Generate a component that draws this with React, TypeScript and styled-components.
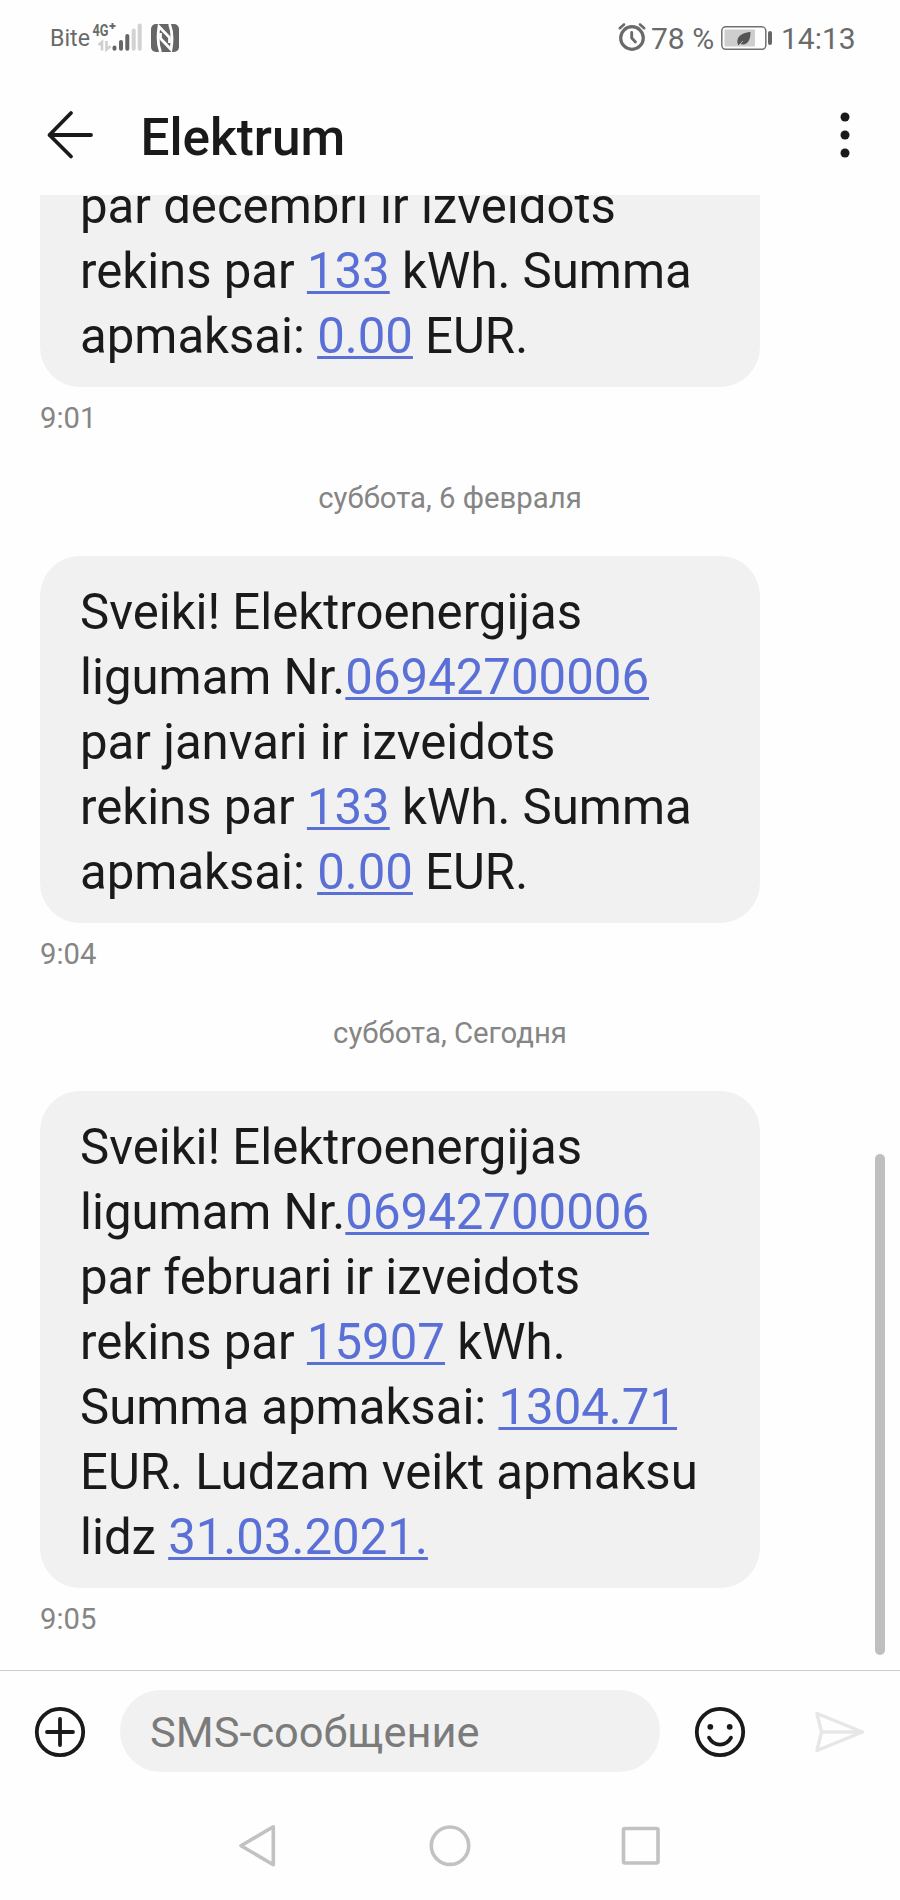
import React from "react";
import styled, { createGlobalStyle } from "styled-components";

const GlobalStyle = createGlobalStyle`
  * { box-sizing: border-box; }
  body {
    margin: 0;
    background: #fefefe;
    font-family: Roboto, "Liberation Sans", sans-serif;
    color: #1a1a1a;
  }
  svg { display: block; flex: none; }
`;

const Screen = styled.div`
  width: 900px;
  height: 1900px;
  display: flex;
  flex-direction: column;
  overflow: hidden;
`;

const StatusBar = styled.div`
  height: 75px;
  flex: none;
  display: flex;
  justify-content: space-between;
  padding: 0 45px 0 50px;
  color: #6a6a6a;
`;

const StatusGroup = styled.div`
  display: flex;
  align-items: flex-start;
`;

const Carrier = styled.span`
  width: 42px;
  padding-top: 24px;
  font-size: 23.2px;
  line-height: 28px;
`;

const StatusIcon = styled.span<{ $top: number; $left?: number; $right?: number }>`
  padding: ${(p) => p.$top}px ${(p) => p.$right ?? 0}px 0 ${(p) => p.$left ?? 0}px;
`;

const StatusText = styled.span<{ $width: number }>`
  width: ${(p) => p.$width}px;
  padding-top: 21px;
  font-size: 30px;
  line-height: 36px;
  white-space: nowrap;
`;

const Header = styled.header`
  height: 120px;
  flex: none;
  display: flex;
  align-items: center;
  padding: 0 30px 0 46px;
`;

const Title = styled.h1`
  flex: 1;
  margin: 0 0 0 44.5px;
  font-size: 51.3px;
  font-weight: 500;
  line-height: 60px;
  padding-top: 5px;
`;

const IconButton = styled.button<{ $size: number }>`
  width: ${(p) => p.$size}px;
  height: ${(p) => p.$size}px;
  flex: none;
  display: grid;
  place-items: center;
  padding: 0;
  border: 0;
  background: none;
  color: inherit;
`;

const Thread = styled.main`
  position: relative;
  height: 1475px;
  flex: none;
  display: flex;
  flex-direction: column;
  justify-content: flex-end;
  padding: 0 0 34px 40px;
  overflow: hidden;
`;

const ScrollThumb = styled.div`
  position: absolute;
  right: 15px;
  bottom: 15px;
  width: 10px;
  height: 501px;
  border-radius: 5px;
  background: #bfbfbf;
`;

const Bubble = styled.div<{ $continued?: boolean }>`
  width: 720px;
  flex: none;
  padding: 24px 20px 18px 40px;
  border-radius: ${(p) => (p.$continued ? "0 0 40px 40px" : "40px")};
  background: #f1f1f1;
  font-size: 49.14px;
  line-height: 65px;
  white-space: nowrap;
`;

const Line = styled.div``;

const Link = styled.a`
  color: #5b70d6;
  text-decoration: underline;
  text-decoration-thickness: 3px;
  text-underline-offset: 3px;
  text-decoration-skip-ink: none;
`;

const Time = styled.time`
  flex: none;
  margin-top: 15px;
  font-size: 29.2px;
  line-height: 33px;
  color: #858585;
`;

const DateLabel = styled.div<{ $gap?: number }>`
  flex: none;
  width: 820px;
  margin: ${(p) => p.$gap ?? 47}px 0 41px;
  font-size: 29.3px;
  line-height: 33px;
  text-align: center;
  color: #858585;
`;

const Composer = styled.footer`
  height: 122px;
  flex: none;
  display: flex;
  align-items: center;
  padding: 0 30px;
  border-top: 1px solid #cbcbcb;
`;

const Field = styled.div`
  width: 540px;
  height: 82px;
  margin: 0 30px 1px;
  padding: 0 30px;
  border-radius: 41px;
  background: #f1f1f1;
  font-size: 43.4px;
  line-height: 86px;
  color: #7b7b7b;
  white-space: nowrap;
`;

const Spacer = styled.div`
  flex: 1;
`;

const NavBar = styled.nav`
  flex: 1;
  display: flex;
  justify-content: center;
  padding-top: 24px;
  gap: 131px;
  color: #c2c2c2;
`;

const SignalIcon = () => (
  <svg width="52" height="34" viewBox="92 20 52 34">
    <text x="92.5" y="36" fontSize="17" fontWeight="700" fill="#6a6a6a" textLength="16" lengthAdjust="spacingAndGlyphs">4G</text>
    <path d="M109.5 26h6M112.5 23v6" stroke="#6a6a6a" strokeWidth="2" />
    <path d="M98.500 45L102 42V50.500M106.500 41V49.500L110.500 46.200" fill="none" stroke="#cfcfcf" strokeWidth="2.600" />
    <g strokeWidth="4" strokeLinecap="round">
      <path d="M114.500 47.500v1.200M121 42v6.700M127.300 36v12.700" stroke="#666" />
      <path d="M133.700 30.500v18.200M139.700 25.500v23.200" stroke="#d2d2d2" />
    </g>
  </svg>
);

const NfcIcon = () => (
  <svg width="28" height="28" viewBox="0 0 28 28">
    <rect x="0" y="0" width="28" height="28" rx="5" fill="#666" />
    <path d="M9.500 28C6.800 21 6.800 10 8 2.500L18.500 13.500V19" fill="none" stroke="#fefefe" strokeWidth="2.800" />
    <path d="M18.500 0C21.300 7 21.300 18 20 25.500L9.500 14.500V9" fill="none" stroke="#fefefe" strokeWidth="2.800" />
  </svg>
);

const AlarmIcon = () => (
  <svg width="28" height="30" viewBox="0 0 28 30" fill="none" stroke="#6a6a6a" strokeLinecap="round">
    <circle cx="14" cy="16" r="11.300" strokeWidth="3.200" />
    <path d="M13.700 10.500v5.500l3.700 4" strokeWidth="2.900" />
    <path d="M1.800 6.200L6 2.500M26.200 6.200L22 2.500" strokeWidth="2.600" />
  </svg>
);

const BatteryIcon = () => (
  <svg width="52" height="26" viewBox="0 0 52 26">
    <rect x="0.800" y="1.800" width="44" height="22.500" rx="4" fill="#fefefe" stroke="#707070" strokeWidth="1.500" />
    <rect x="3.500" y="4.500" width="30.500" height="17" rx="1" fill="#cecece" />
    <path d="M17.500 20.500C15 16 16 8 29.500 7C29.500 16 26 21 19.500 19Z" fill="#555" />
    <path d="M17 21L22 16" stroke="#cecece" strokeWidth="0.800" />
    <path d="M49 8v10" stroke="#666" strokeWidth="4" strokeLinecap="round" />
  </svg>
);

const BackIcon = () => (
  <svg width="50" height="50" viewBox="0 0 50 50" fill="none" stroke="#1a1a1a" strokeWidth="3.800" strokeLinecap="round" strokeLinejoin="round">
    <path d="M25 3L3.500 25L25 46.500M3.500 25H45" />
  </svg>
);

const MoreIcon = () => (
  <svg width="10" height="50" viewBox="0 0 10 50" fill="#1a1a1a">
    <circle cx="5" cy="7" r="4.500" />
    <circle cx="5" cy="25" r="4.500" />
    <circle cx="5" cy="43" r="4.500" />
  </svg>
);

const PlusIcon = () => (
  <svg width="52" height="52" viewBox="0 0 52 52" fill="none" stroke="#1a1a1a" strokeWidth="3.800" strokeLinecap="round">
    <circle cx="26" cy="26" r="23.200" />
    <path d="M26 13v26M13 26h26" />
  </svg>
);

const SmileIcon = () => (
  <svg width="52" height="52" viewBox="0 0 52 52" fill="none" stroke="#1a1a1a" strokeWidth="3.800" strokeLinecap="round">
    <circle cx="26" cy="26" r="23.200" />
    <circle cx="16.300" cy="20.800" r="2.900" fill="#1a1a1a" stroke="none" />
    <circle cx="35.700" cy="20.800" r="2.900" fill="#1a1a1a" stroke="none" />
    <path d="M15 31.700C20 41 32 41 37 31.700" />
  </svg>
);

const SendIcon = () => (
  <svg width="50" height="42" viewBox="0 0 50 42" fill="none" stroke="#e7e7e7" strokeWidth="3.400" strokeLinejoin="round">
    <path d="M2 2.500L47.500 21L2 39.500L6.500 21ZM6.500 21H47" />
  </svg>
);

const NavIcon = ({ children }: { children: React.ReactNode }) => (
  <svg width="60" height="60" viewBox="0 0 60 60" fill="none" stroke="currentColor" strokeWidth="3.600" strokeLinejoin="round">
    {children}
  </svg>
);

export default function App() {
  return (
    <>
      <GlobalStyle />
      <Screen>
        <StatusBar>
          <StatusGroup>
            <Carrier>Bite</Carrier>
            <StatusIcon $top={20}><SignalIcon /></StatusIcon>
            <StatusIcon $top={24} $left={7}><NfcIcon /></StatusIcon>
          </StatusGroup>
          <StatusGroup>
            <StatusIcon $top={22} $right={5}><AlarmIcon /></StatusIcon>
            <StatusText $width={70}>78 %</StatusText>
            <StatusIcon $top={25} $right={8}><BatteryIcon /></StatusIcon>
            <StatusText $width={74}>14:13</StatusText>
          </StatusGroup>
        </StatusBar>
        <Header>
          <IconButton $size={50} aria-label="Back"><BackIcon /></IconButton>
          <Title>Elektrum</Title>
          <IconButton $size={50} aria-label="More"><MoreIcon /></IconButton>
        </Header>
        <Thread>
          <Bubble $continued>
            <Line>par decembri ir izveidots</Line>
            <Line>rekins par <Link>133</Link> kWh. Summa</Line>
            <Line>apmaksai: <Link>0.00</Link> EUR.</Line>
          </Bubble>
          <Time>9:01</Time>
          <DateLabel>суббота, 6 февраля</DateLabel>
          <Bubble>
            <Line>Sveiki! Elektroenergijas</Line>
            <Line>ligumam Nr.<Link>06942700006</Link></Line>
            <Line>par janvari ir izveidots</Line>
            <Line>rekins par <Link>133</Link> kWh. Summa</Line>
            <Line>apmaksai: <Link>0.00</Link> EUR.</Line>
          </Bubble>
          <Time>9:04</Time>
          <DateLabel $gap={46.4}>суббота, Сегодня</DateLabel>
          <Bubble>
            <Line>Sveiki! Elektroenergijas</Line>
            <Line>ligumam Nr.<Link>06942700006</Link></Line>
            <Line>par februari ir izveidots</Line>
            <Line>rekins par <Link>15907</Link> kWh.</Line>
            <Line>Summa apmaksai: <Link>1304.71</Link></Line>
            <Line>EUR. Ludzam veikt apmaksu</Line>
            <Line>lidz <Link>31.03.2021.</Link></Line>
          </Bubble>
          <Time>9:05</Time>
          <ScrollThumb />
        </Thread>
        <Composer>
          <IconButton $size={60} aria-label="Attach"><PlusIcon /></IconButton>
          <Field>SMS-сообщение</Field>
          <IconButton $size={60} aria-label="Emoji"><SmileIcon /></IconButton>
          <Spacer />
          <IconButton $size={60} aria-label="Send"><SendIcon /></IconButton>
        </Composer>
        <NavBar>
          <NavIcon><path d="M44.300 10.800V48.700L12 29.700Z" /></NavIcon>
          <NavIcon><circle cx="30" cy="29.700" r="18.700" /></NavIcon>
          <NavIcon><rect x="12.500" y="12.500" width="34.500" height="34.500" rx="1.500" /></NavIcon>
        </NavBar>
      </Screen>
    </>
  );
}
